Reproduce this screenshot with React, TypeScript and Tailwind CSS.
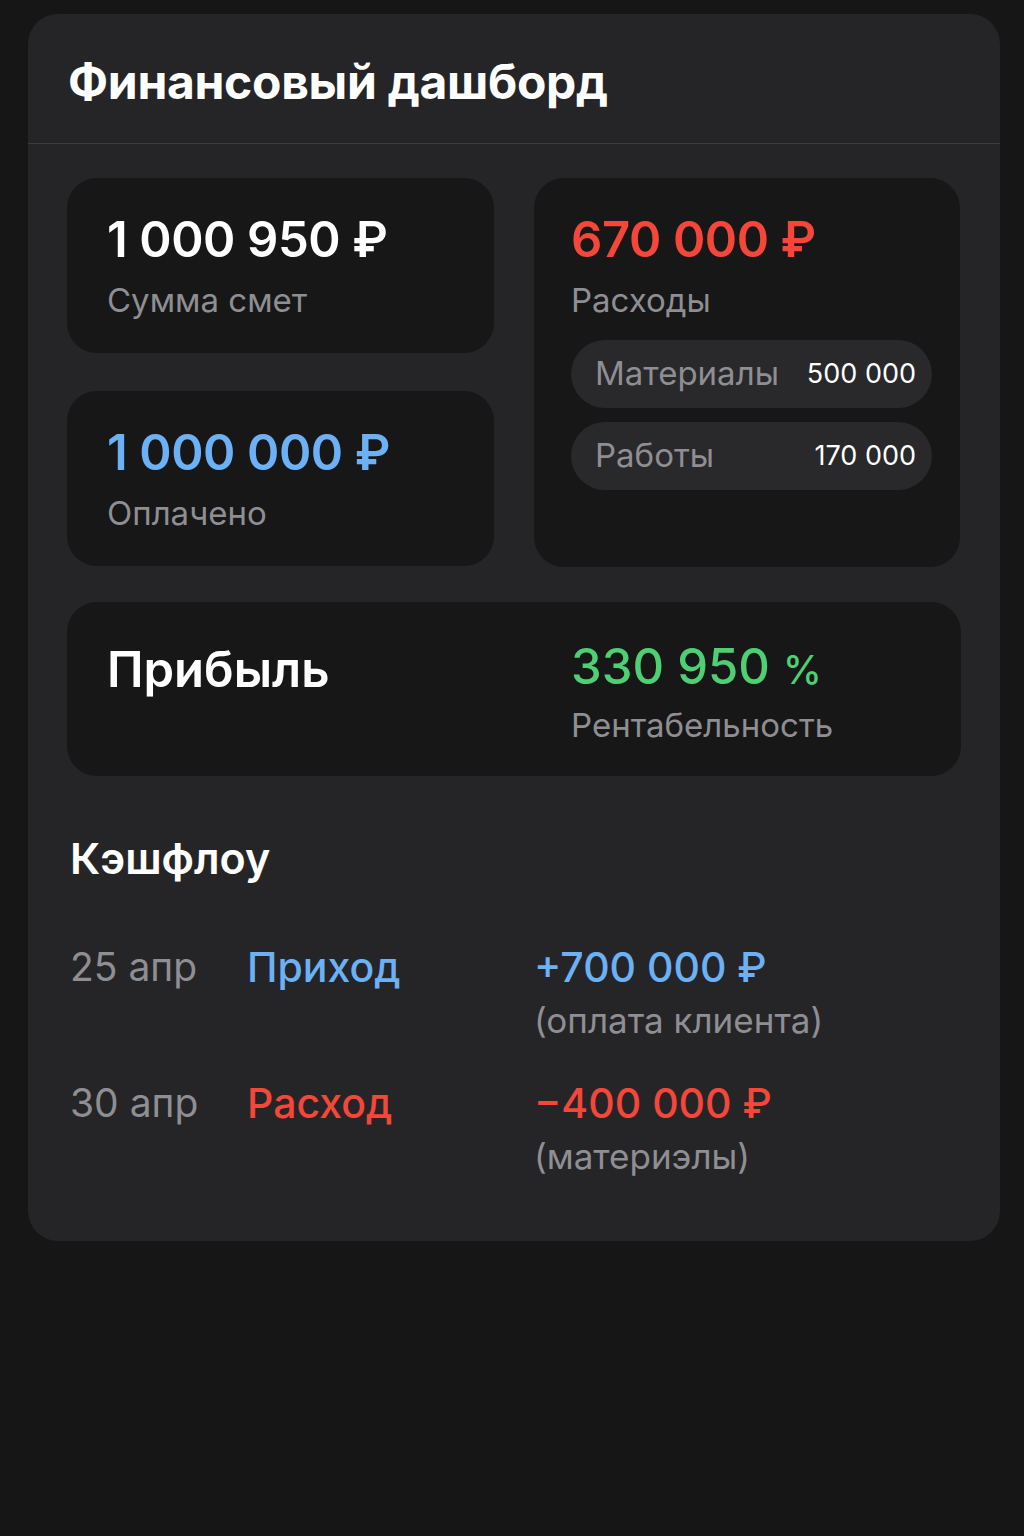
const font = { fontFamily: "Inter, 'Noto Sans', sans-serif" };

const StatCard = ({ value, label, color }: { value: string; label: string; color: string }) => (
  <div className="rounded-[30px] bg-[#171718] px-10 pt-[32px] h-[175px]">
    <div className={`text-[49px] font-semibold leading-[60px] tracking-[-0.4px] ${color}`}>{value}</div>
    <div className="text-[33px] leading-[44px] mt-[8px] text-[#8e8e93]">{label}</div>
  </div>
);

const Pill = ({ name, amount }: { name: string; amount: string }) => (
  <div className="flex items-center justify-between h-[68px] rounded-full bg-[#29292b] pl-6 pr-4">
    <span className="text-[33px] text-[#8e8e93]">{name}</span>
    <span className="text-[27px] text-white">{amount}</span>
  </div>
);

const Row = ({ date, type, typeColor, amount, note }: { date: string; type: string; typeColor: string; amount: string; note: string }) => (
  <div className="grid grid-cols-[177px_287px_1fr]">
    <div className="text-[39px] leading-[50px] text-[#8e8e93]">{date}</div>
    <div className={`text-[41px] leading-[50px] font-medium ${typeColor}`}>{type}</div>
    <div>
      <div className={`text-[41px] leading-[50px] font-medium ${typeColor}`}>{amount}</div>
      <div className="text-[35px] leading-[44px] mt-[6px] text-[#8e8e93]">{note}</div>
    </div>
  </div>
);

export default function App() {
  return (
    <div className="min-h-[1536px] bg-[#161616] pt-[14px] pl-[28px] pr-[24px]" style={font}>
      <div className="rounded-[30px] bg-[#252527] pb-[63px]">
        <div className="h-[130px] flex items-center px-10 border-b border-[#3c3c3e]">
          <h1 className="text-[48px] font-bold text-white tracking-[-0.3px] mt-[6px]">Финансовый дашборд</h1>
        </div>
        <div className="px-[39px] pt-[34px]">
          <div className="grid grid-cols-[427px_426px] gap-x-[40px]">
            <div className="flex flex-col gap-[38px]">
              <StatCard value="1 000 950 ₽" label="Сумма смет" color="text-white" />
              <StatCard value="1 000 000 ₽" label="Оплачено" color="text-[#6cb0f5]" />
            </div>
            <div className="rounded-[30px] bg-[#171718] px-[37px] pt-[32px] pb-6 h-[389px]">
              <div className="text-[49px] font-semibold leading-[60px] tracking-[-0.4px] text-[#f4473a]">670 000 ₽</div>
              <div className="text-[33px] leading-[44px] mt-[8px] text-[#8e8e93]">Расходы</div>
              <div className="flex flex-col gap-[14px] mt-[18px] mr-[-9px]">
                <Pill name="Материалы" amount="500 000" />
                <Pill name="Работы" amount="170 000" />
              </div>
            </div>
          </div>

          <div className="mt-[35px] rounded-[30px] bg-[#171718] h-[174px] flex pl-10 pt-[38px]">
            <div className="w-[464px] text-[49px] font-semibold leading-[60px] text-white">Прибыль</div>
            <div>
              <div className="text-[49px] font-medium leading-[54px] text-[#4fcf74]">
                330 950 <span className="text-[39px]">%</span>
              </div>
              <div className="text-[33px] leading-[44px] mt-[6px] text-[#8e8e93]">Рентабельность</div>
            </div>
          </div>

          <h2 className="mt-[54px] ml-[3px] text-[43px] font-semibold leading-[56px] text-white">Кэшфлоу</h2>

          <div className="mt-[56px] ml-[3px] flex flex-col gap-[36px]">
            <Row date="25 апр" type="Приход" typeColor="text-[#6cb0f5]" amount="+700 000 ₽" note="(оплата клиента)" />
            <Row date="30 апр" type="Расход" typeColor="text-[#f4473a]" amount="−400 000 ₽" note="(материэлы)" />
          </div>
        </div>
      </div>
    </div>
  );
}
